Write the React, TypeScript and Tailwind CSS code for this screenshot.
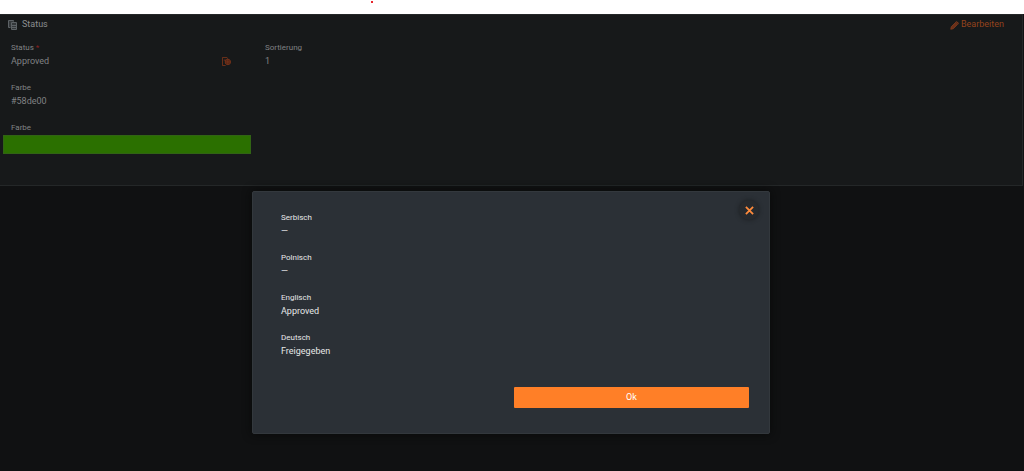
import { useState } from 'react'

const translations = [
  { language: 'Serbisch', text: '—' },
  { language: 'Polnisch', text: '—' },
  { language: 'Englisch', text: 'Approved' },
  { language: 'Deutsch', text: 'Freigegeben' },
]

function StatusIcon() {
  return (
    <svg viewBox="0 0 10 10" className="w-[10px] h-[10px]" fill="none" stroke="#5d6266" aria-hidden="true">
      <path d="M2.500 7.500h-2v-7h5v1" fill="#34383b" />
      <path d="M3.500 2.500h5v7h-5z" fill="#34383b" />
      <path d="M4 5.500h4M4 7.500h4" />
    </svg>
  )
}

function TranslateIcon() {
  return (
    <svg viewBox="0 0 10 10" className="w-[9px] h-[9px]" fill="none" stroke="#77331a" aria-hidden="true">
      <path d="M4 9.500H.5v-9h5l1 1.500M2 3.500h3" />
      <circle cx="6.500" cy="5.500" r="3" fill="#4c2217" />
      <path d="M3.500 5.500h6M6.500 2.500v6" />
    </svg>
  )
}

function PencilIcon() {
  return (
    <svg viewBox="0 0 10 10" className="w-[9px] h-[9px]" fill="#6b3019" stroke="#8a3f1d" strokeWidth="0.800" aria-hidden="true">
      <path d="M.8 9.200l.6-2.800 5-5 2.200 2.200-5 5zM7 .8l.5-.3 2 2-.3.500z" />
    </svg>
  )
}

function CloseIcon() {
  return (
    <svg viewBox="0 0 10 10" className="w-[9px] h-[9px]" stroke="#ff8b3c" strokeWidth="2" aria-hidden="true">
      <path d="M1 1l8 8M9 1L1 9" />
    </svg>
  )
}

export default function App() {
  const [open, setOpen] = useState(true)

  return (
    <div className="relative min-h-screen bg-[#101112] font-[Roboto,sans-serif]">
      <div className="flex h-[14px] bg-white">
        <div className="w-[371px]" />
        <span className="mt-px h-[2px] w-[2px] bg-[#e8262d]" />
      </div>

      <main className="mr-px min-h-[172px] border-t border-r border-b border-[#242728] bg-[#17191a]">
        <header className="flex h-5 items-center justify-between pr-[18px] pl-2">
          <h1 className="flex items-center gap-1 text-[9px] text-[#8b8d8f]">
            <StatusIcon />
            Status
          </h1>
          <button className="flex items-center gap-[2px] text-[9px] text-[#94431c]">
            <PencilIcon />
            Bearbeiten
          </button>
        </header>

        <dl className="grid grid-cols-4 gap-x-[6px] gap-y-[14px] pt-[7px] pr-[9px] pl-[3px] text-[#808284]">
          <div className="px-2">
            <dt className="text-[8px] leading-3">
              Status <span className="text-[#8c2020]">*</span>
            </dt>
            <dd className="flex items-center justify-between pr-3 text-[9px] leading-[14px]">
              Approved
              <button aria-label="Übersetzungen" onClick={() => setOpen(true)}>
                <TranslateIcon />
              </button>
            </dd>
          </div>
          <div className="px-2">
            <dt className="text-[8px] leading-3">Sortierung</dt>
            <dd className="text-[9px] leading-[14px]">1</dd>
          </div>
          <div className="col-start-1 px-2">
            <dt className="text-[8px] leading-3">Farbe</dt>
            <dd className="text-[9px] leading-[14px]">#58de00</dd>
          </div>
          <div className="col-start-1">
            <dt className="px-2 text-[8px] leading-3">Farbe</dt>
            <dd className="mt-px h-[19px] border border-[#316414] bg-[#2b7000]" />
          </div>
        </dl>
      </main>

      {open && (
        <div className="absolute inset-x-0 top-[191px] flex justify-center pr-[2px]">
          <div
            role="dialog"
            aria-label="Übersetzungen"
            className="w-[518px] max-w-full rounded-[2px] border border-[#33383d] bg-[#2b3036] px-5 pt-2 pb-[25px] shadow-[0_0_10px_#080909]"
          >
            <div className="flex items-start justify-between">
              <dl className="flex flex-col gap-[14px] pt-3 pl-2 text-[#e6e7e8]">
                {translations.map((t) => (
                  <div key={t.language}>
                    <dt className="text-[8px] leading-3">{t.language}</dt>
                    <dd className="text-[9px] leading-[14px]">{t.text}</dd>
                  </div>
                ))}
              </dl>
              <button
                aria-label="Schließen"
                onClick={() => setOpen(false)}
                className="-mr-[10px] flex h-5 w-5 items-center justify-center rounded-full bg-[#262a2e] shadow-[0_0_4px_#1c1f22]"
              >
                <CloseIcon />
              </button>
            </div>

            <div className="mt-[29px] grid grid-cols-2 gap-[6px]">
              <button
                onClick={() => setOpen(false)}
                className="col-start-2 h-[21px] rounded-[1px] bg-[#ff7f27] text-[9px] text-white"
              >
                Ok
              </button>
            </div>
          </div>
        </div>
      )}
    </div>
  )
}
